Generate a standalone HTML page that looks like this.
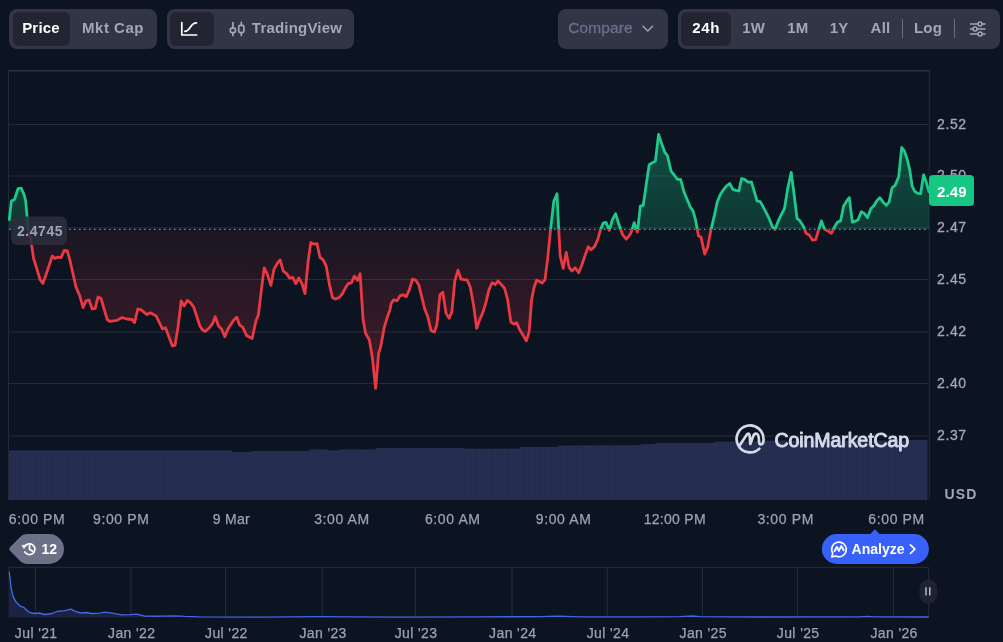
<!DOCTYPE html>
<html><head><meta charset="utf-8"><title>Chart</title>
<style>
*{box-sizing:border-box;margin:0;padding:0}
html,body{width:1003px;height:642px;overflow:hidden;background:#0d1421;font-family:"Liberation Sans",sans-serif;}
body{position:relative;color:#a1a7bb}
.grp{position:absolute;top:9px;height:40px;background:#323546;border-radius:8px}
.pill{position:absolute;top:3px;height:34px;background:#222531;border-radius:6px}
.t{position:absolute;top:-1.5px;height:40px;line-height:40px;font-size:15px;font-weight:bold;color:#a1a7bb;white-space:nowrap;text-align:center;transform:translateX(-50%);letter-spacing:.2px}
.t.w{color:#fff}
.sep{position:absolute;top:10px;width:1px;height:19px;background:#646b80}
svg{position:absolute;left:0;top:0}
.yl{position:absolute;left:937px;width:40px;height:16px;line-height:16px;font-size:14px;color:#a1a7bb;letter-spacing:.6px;-webkit-text-stroke:.3px #a1a7bb}
.xl{position:absolute;top:511px;width:80px;height:16px;line-height:16px;text-align:center;font-size:14px;color:#a1a7bb;white-space:nowrap;letter-spacing:.35px;-webkit-text-stroke:.25px #9ba1b6;color:#9ba1b6}
.nl{position:absolute;top:624.5px;width:80px;height:16px;line-height:16px;text-align:center;font-size:14px;color:#a1a7bb;white-space:nowrap;letter-spacing:.38px;-webkit-text-stroke:.25px #9ba1b6;color:#9ba1b6}
.ly{position:absolute;left:0;top:0;width:1003px;height:642px;will-change:transform;transform:translateZ(0)}
</style></head><body>

<div class="ly"><!-- toolbar -->
<div class="grp" style="left:9px;width:148px">
  <div class="pill" style="left:4px;width:57px"></div>
  <div class="t w" style="left:32px">Price</div>
  <div class="t" style="left:104px;letter-spacing:.5px">Mkt Cap</div>
</div>
<div class="grp" style="left:167px;width:187px">
  <div class="pill" style="left:3px;width:44px"></div>
  <div class="t" style="left:130px">TradingView</div>
</div>
<div class="grp" style="left:558px;width:110px">
  <div class="t" style="left:42.5px;font-weight:normal;color:#68708a;-webkit-text-stroke:.3px #68708a;font-size:15.5px;letter-spacing:.1px">Compare</div>
</div>
<div class="grp" style="left:678px;width:322px">
  <div class="pill" style="left:3px;width:50px"></div>
  <div class="t w" style="left:28.2px;letter-spacing:.7px">24h</div>
  <div class="t" style="left:75.6px">1W</div>
  <div class="t" style="left:119.8px">1M</div>
  <div class="t" style="left:161.2px">1Y</div>
  <div class="t" style="left:202.5px">All</div>
  <div class="sep" style="left:224px"></div>
  <div class="t" style="left:250px">Log</div>
  <div class="sep" style="left:276px"></div>
</div>
</div>

<svg width="1003" height="642" viewBox="0 0 1003 642">
<defs>
<clipPath id="up"><rect x="0" y="0" width="1003" height="229.4"/></clipPath>
<clipPath id="dn"><rect x="0" y="229.4" width="1003" height="300"/></clipPath>
<linearGradient id="gg" x1="0" y1="130" x2="0" y2="229.4" gradientUnits="userSpaceOnUse">
<stop offset="0" stop-color="#16c784" stop-opacity=".34"/><stop offset="1" stop-color="#16c784" stop-opacity=".2"/></linearGradient>
<linearGradient id="rg" x1="0" y1="229.4" x2="0" y2="390" gradientUnits="userSpaceOnUse">
<stop offset="0" stop-color="#ea3943" stop-opacity=".06"/><stop offset="1" stop-color="#ea3943" stop-opacity=".25"/></linearGradient>
<linearGradient id="ng" x1="0" y1="570" x2="0" y2="617" gradientUnits="userSpaceOnUse">
<stop offset="0" stop-color="#3861fb" stop-opacity=".35"/><stop offset="1" stop-color="#3861fb" stop-opacity=".1"/></linearGradient>
</defs>
<!-- toolbar icons -->
<g fill="none" stroke="#fff" stroke-width="1.7" stroke-linecap="round" stroke-linejoin="round">
<path d="M181.8,22.5V35H196.6"/><path d="M184.8,31.4C191,31.2 189.6,23 196.5,22.8"/>
</g>
<g fill="none" stroke="#a1a7bb" stroke-width="1.7" stroke-linecap="round" stroke-linejoin="round">
<rect x="230.3" y="28.1" width="5.2" height="4.5" rx="1.5"/><path d="M232.9,22.5V28.1M232.9,32.6V35.4"/>
<rect x="238.7" y="25.3" width="5.2" height="7.3" rx="1.5"/><path d="M241.3,22.3V25.3M241.3,32.6V35.4"/>
</g>
<path d="M643,26.3L647.8,31L652.6,26.3" fill="none" stroke="#9ea4b8" stroke-width="1.5" stroke-linecap="round" stroke-linejoin="round"/>
<g fill="none" stroke="#a1a7bb" stroke-width="1.5" stroke-linecap="round">
<path d="M970.4,23.9H977.9M982.3,23.9H985M970.4,29H972.8M977.2,29H985M970.4,34H977.9M982.3,34H985"/>
<circle cx="980.1" cy="23.9" r="2"/><circle cx="975" cy="29" r="2"/><circle cx="980.1" cy="34" r="2"/>
</g>

<!-- grid -->
<g stroke="#262b3b" stroke-width="1"><line x1="8.5" x2="929.3" y1="124.5" y2="124.5"/><line x1="8.5" x2="929.3" y1="176.0" y2="176.0"/><line x1="8.5" x2="929.3" y1="227.8" y2="227.8"/><line x1="8.5" x2="929.3" y1="279.5" y2="279.5"/><line x1="8.5" x2="929.3" y1="332.0" y2="332.0"/><line x1="8.5" x2="929.3" y1="383.5" y2="383.5"/><line x1="8.5" x2="929.3" y1="436.0" y2="436.0"/></g>
<g stroke="#242938" stroke-width="1">
<line x1="8.5" x2="8.5" y1="70.5" y2="499.8"/><line x1="929.3" x2="929.3" y1="70.5" y2="499.8"/>
</g>
<line x1="8.0" x2="929.8" y1="70.75" y2="70.75" stroke="#2c3142" stroke-width="1.3"/>
<!-- volume -->
<path d="M9.2,499.8 L9.2,450.5 L12.4,450.5 L15.6,450.5 L18.8,450.5 L22.0,450.5 L25.1,450.5 L28.3,450.5 L31.5,450.5 L34.7,450.5 L37.9,450.5 L41.1,450.5 L44.3,450.5 L47.5,450.5 L50.7,450.5 L53.8,450.5 L57.0,450.5 L60.2,450.5 L63.4,450.5 L66.6,450.5 L69.8,450.5 L73.0,450.5 L76.2,450.5 L79.4,450.5 L82.5,450.5 L85.7,450.5 L88.9,450.5 L92.1,450.5 L95.3,450.5 L98.5,450.5 L101.7,450.5 L104.9,450.5 L108.1,450.5 L111.2,450.5 L114.4,450.5 L117.6,450.5 L120.8,450.6 L124.0,450.6 L127.2,450.6 L130.4,450.6 L133.6,450.6 L136.8,450.6 L139.9,450.6 L143.1,450.6 L146.3,450.6 L149.5,450.6 L152.7,450.6 L155.9,450.6 L159.1,450.6 L162.3,450.6 L165.5,450.6 L168.6,450.6 L171.8,450.6 L175.0,450.6 L178.2,450.6 L181.4,450.6 L184.6,450.6 L187.8,450.6 L191.0,450.6 L194.2,450.6 L197.3,450.6 L200.5,450.6 L203.7,450.6 L206.9,450.6 L210.1,450.6 L213.3,450.6 L216.5,450.6 L219.7,450.6 L222.9,450.6 L226.0,450.6 L229.2,450.6 L232.4,452.0 L235.6,452.0 L238.8,452.0 L242.0,452.0 L245.2,452.0 L248.4,452.0 L251.6,452.0 L254.7,450.9 L257.9,450.9 L261.1,450.9 L264.3,450.9 L267.5,450.9 L270.7,450.9 L273.9,450.9 L277.1,450.9 L280.3,450.9 L283.4,450.9 L286.6,450.9 L289.8,450.9 L293.0,450.9 L296.2,450.9 L299.4,450.9 L302.6,450.9 L305.8,450.9 L309.0,450.9 L312.1,449.5 L315.3,449.5 L318.5,449.5 L321.7,449.5 L324.9,449.5 L328.1,450.6 L331.3,450.6 L334.5,450.6 L337.7,450.6 L340.8,449.5 L344.0,449.5 L347.2,449.5 L350.4,449.5 L353.6,449.5 L356.8,449.5 L360.0,449.5 L363.2,449.5 L366.4,449.5 L369.5,449.5 L372.7,449.5 L375.9,449.5 L379.1,448.1 L382.3,448.1 L385.5,448.1 L388.7,448.1 L391.9,448.1 L395.1,448.1 L398.2,448.1 L401.4,448.1 L404.6,448.1 L407.8,448.1 L411.0,448.1 L414.2,448.1 L417.4,448.1 L420.6,448.1 L423.8,448.1 L426.9,448.1 L430.1,448.1 L433.3,448.1 L436.5,448.1 L439.7,448.1 L442.9,448.1 L446.1,448.1 L449.3,448.1 L452.5,448.1 L455.6,448.1 L458.8,448.1 L462.0,448.1 L465.2,448.8 L468.4,448.8 L471.6,448.8 L474.8,448.8 L478.0,448.8 L481.2,448.8 L484.3,448.8 L487.5,448.8 L490.7,448.8 L493.9,448.7 L497.1,448.7 L500.3,448.7 L503.5,448.7 L506.7,448.7 L509.9,448.7 L513.0,448.7 L516.2,448.7 L519.4,448.7 L522.6,447.0 L525.8,447.0 L529.0,447.0 L532.2,447.0 L535.4,447.0 L538.6,447.0 L541.7,447.0 L544.9,447.0 L548.1,447.0 L551.3,447.0 L554.5,447.0 L557.7,447.0 L560.9,445.7 L564.1,445.7 L567.3,445.7 L570.4,445.6 L573.6,445.6 L576.8,445.6 L580.0,445.6 L583.2,445.6 L586.4,445.6 L589.6,445.5 L592.8,445.5 L596.0,445.5 L599.1,445.5 L602.3,445.5 L605.5,445.5 L608.7,445.5 L611.9,445.4 L615.1,445.4 L618.3,445.4 L621.5,445.4 L624.7,445.4 L627.8,445.3 L631.0,445.3 L634.2,445.3 L637.4,445.2 L640.6,445.2 L643.8,444.3 L647.0,444.3 L650.2,444.3 L653.4,444.3 L656.5,442.9 L659.7,442.9 L662.9,442.9 L666.1,442.9 L669.3,442.9 L672.5,442.9 L675.7,442.9 L678.9,442.9 L682.1,442.9 L685.2,442.9 L688.4,442.9 L691.6,442.9 L694.8,442.9 L698.0,442.9 L701.2,442.9 L704.4,442.9 L707.6,442.9 L710.8,442.9 L713.9,442.9 L717.1,441.8 L720.3,441.8 L723.5,441.8 L726.7,441.7 L729.9,441.7 L733.1,441.7 L736.3,441.7 L739.5,441.7 L742.6,441.7 L745.8,441.7 L749.0,441.6 L752.2,441.6 L755.4,441.6 L758.6,441.6 L761.8,440.8 L765.0,440.8 L768.2,440.8 L771.3,440.8 L774.5,440.8 L777.7,440.8 L780.9,440.8 L784.1,440.8 L787.3,440.8 L790.5,440.8 L793.7,440.8 L796.9,440.8 L800.0,440.8 L803.2,440.8 L806.4,440.8 L809.6,440.8 L812.8,440.8 L816.0,440.8 L819.2,440.8 L822.4,440.8 L825.6,440.8 L828.7,440.8 L831.9,440.8 L835.1,440.8 L838.3,440.8 L841.5,440.8 L844.7,440.8 L847.9,440.8 L851.1,440.8 L854.3,440.8 L857.4,440.8 L860.6,440.8 L863.8,440.8 L867.0,440.8 L870.2,440.8 L873.4,440.8 L876.6,440.8 L879.8,440.8 L883.0,440.8 L886.1,440.8 L889.3,440.8 L892.5,440.8 L895.7,440.8 L898.9,440.8 L902.1,440.8 L905.3,440.6 L908.5,439.9 L911.7,439.9 L914.8,439.9 L918.0,439.9 L921.2,439.9 L924.4,439.9 L927.6,439.9 L927.6,499.8 Z" fill="#212a4c"/>
<g fill="#262f52"><rect x="9.20" y="450.5" width="2.64" height="49.3"/><rect x="12.39" y="450.5" width="2.64" height="49.3"/><rect x="15.58" y="450.5" width="2.64" height="49.3"/><rect x="18.77" y="450.5" width="2.64" height="49.3"/><rect x="21.96" y="450.5" width="2.64" height="49.3"/><rect x="25.14" y="450.5" width="2.64" height="49.3"/><rect x="28.33" y="450.5" width="2.64" height="49.3"/><rect x="31.52" y="450.5" width="2.64" height="49.3"/><rect x="34.71" y="450.5" width="2.64" height="49.3"/><rect x="37.90" y="450.5" width="2.64" height="49.3"/><rect x="41.09" y="450.5" width="2.64" height="49.3"/><rect x="44.28" y="450.5" width="2.64" height="49.3"/><rect x="47.47" y="450.5" width="2.64" height="49.3"/><rect x="50.66" y="450.5" width="2.64" height="49.3"/><rect x="53.84" y="450.5" width="2.64" height="49.3"/><rect x="57.03" y="450.5" width="2.64" height="49.3"/><rect x="60.22" y="450.5" width="2.64" height="49.3"/><rect x="63.41" y="450.5" width="2.64" height="49.3"/><rect x="66.60" y="450.5" width="2.64" height="49.3"/><rect x="69.79" y="450.5" width="2.64" height="49.3"/><rect x="72.98" y="450.5" width="2.64" height="49.3"/><rect x="76.17" y="450.5" width="2.64" height="49.3"/><rect x="79.36" y="450.5" width="2.64" height="49.3"/><rect x="82.54" y="450.5" width="2.64" height="49.3"/><rect x="85.73" y="450.5" width="2.64" height="49.3"/><rect x="88.92" y="450.5" width="2.64" height="49.3"/><rect x="92.11" y="450.5" width="2.64" height="49.3"/><rect x="95.30" y="450.5" width="2.64" height="49.3"/><rect x="98.49" y="450.5" width="2.64" height="49.3"/><rect x="101.68" y="450.5" width="2.64" height="49.3"/><rect x="104.87" y="450.5" width="2.64" height="49.3"/><rect x="108.06" y="450.5" width="2.64" height="49.3"/><rect x="111.24" y="450.5" width="2.64" height="49.3"/><rect x="114.43" y="450.5" width="2.64" height="49.3"/><rect x="117.62" y="450.5" width="2.64" height="49.3"/><rect x="120.81" y="450.6" width="2.64" height="49.2"/><rect x="124.00" y="450.6" width="2.64" height="49.2"/><rect x="127.19" y="450.6" width="2.64" height="49.2"/><rect x="130.38" y="450.6" width="2.64" height="49.2"/><rect x="133.57" y="450.6" width="2.64" height="49.2"/><rect x="136.76" y="450.6" width="2.64" height="49.2"/><rect x="139.94" y="450.6" width="2.64" height="49.2"/><rect x="143.13" y="450.6" width="2.64" height="49.2"/><rect x="146.32" y="450.6" width="2.64" height="49.2"/><rect x="149.51" y="450.6" width="2.64" height="49.2"/><rect x="152.70" y="450.6" width="2.64" height="49.2"/><rect x="155.89" y="450.6" width="2.64" height="49.2"/><rect x="159.08" y="450.6" width="2.64" height="49.2"/><rect x="162.27" y="450.6" width="2.64" height="49.2"/><rect x="165.46" y="450.6" width="2.64" height="49.2"/><rect x="168.64" y="450.6" width="2.64" height="49.2"/><rect x="171.83" y="450.6" width="2.64" height="49.2"/><rect x="175.02" y="450.6" width="2.64" height="49.2"/><rect x="178.21" y="450.6" width="2.64" height="49.2"/><rect x="181.40" y="450.6" width="2.64" height="49.2"/><rect x="184.59" y="450.6" width="2.64" height="49.2"/><rect x="187.78" y="450.6" width="2.64" height="49.2"/><rect x="190.97" y="450.6" width="2.64" height="49.2"/><rect x="194.16" y="450.6" width="2.64" height="49.2"/><rect x="197.34" y="450.6" width="2.64" height="49.2"/><rect x="200.53" y="450.6" width="2.64" height="49.2"/><rect x="203.72" y="450.6" width="2.64" height="49.2"/><rect x="206.91" y="450.6" width="2.64" height="49.2"/><rect x="210.10" y="450.6" width="2.64" height="49.2"/><rect x="213.29" y="450.6" width="2.64" height="49.2"/><rect x="216.48" y="450.6" width="2.64" height="49.2"/><rect x="219.67" y="450.6" width="2.64" height="49.2"/><rect x="222.86" y="450.6" width="2.64" height="49.2"/><rect x="226.04" y="450.6" width="2.64" height="49.2"/><rect x="229.23" y="450.6" width="2.64" height="49.2"/><rect x="232.42" y="452.0" width="2.64" height="47.8"/><rect x="235.61" y="452.0" width="2.64" height="47.8"/><rect x="238.80" y="452.0" width="2.64" height="47.8"/><rect x="241.99" y="452.0" width="2.64" height="47.8"/><rect x="245.18" y="452.0" width="2.64" height="47.8"/><rect x="248.37" y="452.0" width="2.64" height="47.8"/><rect x="251.56" y="450.9" width="2.64" height="48.9"/><rect x="254.74" y="450.9" width="2.64" height="48.9"/><rect x="257.93" y="450.9" width="2.64" height="48.9"/><rect x="261.12" y="450.9" width="2.64" height="48.9"/><rect x="264.31" y="450.9" width="2.64" height="48.9"/><rect x="267.50" y="450.9" width="2.64" height="48.9"/><rect x="270.69" y="450.9" width="2.64" height="48.9"/><rect x="273.88" y="450.9" width="2.64" height="48.9"/><rect x="277.07" y="450.9" width="2.64" height="48.9"/><rect x="280.26" y="450.9" width="2.64" height="48.9"/><rect x="283.44" y="450.9" width="2.64" height="48.9"/><rect x="286.63" y="450.9" width="2.64" height="48.9"/><rect x="289.82" y="450.9" width="2.64" height="48.9"/><rect x="293.01" y="450.9" width="2.64" height="48.9"/><rect x="296.20" y="450.9" width="2.64" height="48.9"/><rect x="299.39" y="450.9" width="2.64" height="48.9"/><rect x="302.58" y="450.9" width="2.64" height="48.9"/><rect x="305.77" y="450.9" width="2.64" height="48.9"/><rect x="308.96" y="449.5" width="2.64" height="50.3"/><rect x="312.14" y="449.5" width="2.64" height="50.3"/><rect x="315.33" y="449.5" width="2.64" height="50.3"/><rect x="318.52" y="449.5" width="2.64" height="50.3"/><rect x="321.71" y="449.5" width="2.64" height="50.3"/><rect x="324.90" y="449.5" width="2.64" height="50.3"/><rect x="328.09" y="450.6" width="2.64" height="49.2"/><rect x="331.28" y="450.6" width="2.64" height="49.2"/><rect x="334.47" y="450.6" width="2.64" height="49.2"/><rect x="337.66" y="450.6" width="2.64" height="49.2"/><rect x="340.84" y="449.5" width="2.64" height="50.3"/><rect x="344.03" y="449.5" width="2.64" height="50.3"/><rect x="347.22" y="449.5" width="2.64" height="50.3"/><rect x="350.41" y="449.5" width="2.64" height="50.3"/><rect x="353.60" y="449.5" width="2.64" height="50.3"/><rect x="356.79" y="449.5" width="2.64" height="50.3"/><rect x="359.98" y="449.5" width="2.64" height="50.3"/><rect x="363.17" y="449.5" width="2.64" height="50.3"/><rect x="366.36" y="449.5" width="2.64" height="50.3"/><rect x="369.54" y="449.5" width="2.64" height="50.3"/><rect x="372.73" y="449.5" width="2.64" height="50.3"/><rect x="375.92" y="448.1" width="2.64" height="51.7"/><rect x="379.11" y="448.1" width="2.64" height="51.7"/><rect x="382.30" y="448.1" width="2.64" height="51.7"/><rect x="385.49" y="448.1" width="2.64" height="51.7"/><rect x="388.68" y="448.1" width="2.64" height="51.7"/><rect x="391.87" y="448.1" width="2.64" height="51.7"/><rect x="395.06" y="448.1" width="2.64" height="51.7"/><rect x="398.24" y="448.1" width="2.64" height="51.7"/><rect x="401.43" y="448.1" width="2.64" height="51.7"/><rect x="404.62" y="448.1" width="2.64" height="51.7"/><rect x="407.81" y="448.1" width="2.64" height="51.7"/><rect x="411.00" y="448.1" width="2.64" height="51.7"/><rect x="414.19" y="448.1" width="2.64" height="51.7"/><rect x="417.38" y="448.1" width="2.64" height="51.7"/><rect x="420.57" y="448.1" width="2.64" height="51.7"/><rect x="423.76" y="448.1" width="2.64" height="51.7"/><rect x="426.94" y="448.1" width="2.64" height="51.7"/><rect x="430.13" y="448.1" width="2.64" height="51.7"/><rect x="433.32" y="448.1" width="2.64" height="51.7"/><rect x="436.51" y="448.1" width="2.64" height="51.7"/><rect x="439.70" y="448.1" width="2.64" height="51.7"/><rect x="442.89" y="448.1" width="2.64" height="51.7"/><rect x="446.08" y="448.1" width="2.64" height="51.7"/><rect x="449.27" y="448.1" width="2.64" height="51.7"/><rect x="452.46" y="448.1" width="2.64" height="51.7"/><rect x="455.64" y="448.1" width="2.64" height="51.7"/><rect x="458.83" y="448.1" width="2.64" height="51.7"/><rect x="462.02" y="448.1" width="2.64" height="51.7"/><rect x="465.21" y="448.8" width="2.64" height="51.0"/><rect x="468.40" y="448.8" width="2.64" height="51.0"/><rect x="471.59" y="448.8" width="2.64" height="51.0"/><rect x="474.78" y="448.8" width="2.64" height="51.0"/><rect x="477.97" y="448.8" width="2.64" height="51.0"/><rect x="481.16" y="448.8" width="2.64" height="51.0"/><rect x="484.34" y="448.8" width="2.64" height="51.0"/><rect x="487.53" y="448.8" width="2.64" height="51.0"/><rect x="490.72" y="448.8" width="2.64" height="51.0"/><rect x="493.91" y="448.7" width="2.64" height="51.1"/><rect x="497.10" y="448.7" width="2.64" height="51.1"/><rect x="500.29" y="448.7" width="2.64" height="51.1"/><rect x="503.48" y="448.7" width="2.64" height="51.1"/><rect x="506.67" y="448.7" width="2.64" height="51.1"/><rect x="509.86" y="448.7" width="2.64" height="51.1"/><rect x="513.04" y="448.7" width="2.64" height="51.1"/><rect x="516.23" y="448.7" width="2.64" height="51.1"/><rect x="519.42" y="447.0" width="2.64" height="52.8"/><rect x="522.61" y="447.0" width="2.64" height="52.8"/><rect x="525.80" y="447.0" width="2.64" height="52.8"/><rect x="528.99" y="447.0" width="2.64" height="52.8"/><rect x="532.18" y="447.0" width="2.64" height="52.8"/><rect x="535.37" y="447.0" width="2.64" height="52.8"/><rect x="538.56" y="447.0" width="2.64" height="52.8"/><rect x="541.74" y="447.0" width="2.64" height="52.8"/><rect x="544.93" y="447.0" width="2.64" height="52.8"/><rect x="548.12" y="447.0" width="2.64" height="52.8"/><rect x="551.31" y="447.0" width="2.64" height="52.8"/><rect x="554.50" y="447.0" width="2.64" height="52.8"/><rect x="557.69" y="445.7" width="2.64" height="54.1"/><rect x="560.88" y="445.7" width="2.64" height="54.1"/><rect x="564.07" y="445.7" width="2.64" height="54.1"/><rect x="567.26" y="445.7" width="2.64" height="54.1"/><rect x="570.44" y="445.6" width="2.64" height="54.2"/><rect x="573.63" y="445.6" width="2.64" height="54.2"/><rect x="576.82" y="445.6" width="2.64" height="54.2"/><rect x="580.01" y="445.6" width="2.64" height="54.2"/><rect x="583.20" y="445.6" width="2.64" height="54.2"/><rect x="586.39" y="445.6" width="2.64" height="54.2"/><rect x="589.58" y="445.5" width="2.64" height="54.3"/><rect x="592.77" y="445.5" width="2.64" height="54.3"/><rect x="595.96" y="445.5" width="2.64" height="54.3"/><rect x="599.14" y="445.5" width="2.64" height="54.3"/><rect x="602.33" y="445.5" width="2.64" height="54.3"/><rect x="605.52" y="445.5" width="2.64" height="54.3"/><rect x="608.71" y="445.4" width="2.64" height="54.4"/><rect x="611.90" y="445.4" width="2.64" height="54.4"/><rect x="615.09" y="445.4" width="2.64" height="54.4"/><rect x="618.28" y="445.4" width="2.64" height="54.4"/><rect x="621.47" y="445.4" width="2.64" height="54.4"/><rect x="624.66" y="445.3" width="2.64" height="54.5"/><rect x="627.84" y="445.3" width="2.64" height="54.5"/><rect x="631.03" y="445.3" width="2.64" height="54.5"/><rect x="634.22" y="445.3" width="2.64" height="54.5"/><rect x="637.41" y="445.2" width="2.64" height="54.6"/><rect x="640.60" y="444.3" width="2.64" height="55.5"/><rect x="643.79" y="444.3" width="2.64" height="55.5"/><rect x="646.98" y="444.3" width="2.64" height="55.5"/><rect x="650.17" y="444.3" width="2.64" height="55.5"/><rect x="653.36" y="444.3" width="2.64" height="55.5"/><rect x="656.54" y="442.9" width="2.64" height="56.9"/><rect x="659.73" y="442.9" width="2.64" height="56.9"/><rect x="662.92" y="442.9" width="2.64" height="56.9"/><rect x="666.11" y="442.9" width="2.64" height="56.9"/><rect x="669.30" y="442.9" width="2.64" height="56.9"/><rect x="672.49" y="442.9" width="2.64" height="56.9"/><rect x="675.68" y="442.9" width="2.64" height="56.9"/><rect x="678.87" y="442.9" width="2.64" height="56.9"/><rect x="682.06" y="442.9" width="2.64" height="56.9"/><rect x="685.24" y="442.9" width="2.64" height="56.9"/><rect x="688.43" y="442.9" width="2.64" height="56.9"/><rect x="691.62" y="442.9" width="2.64" height="56.9"/><rect x="694.81" y="442.9" width="2.64" height="56.9"/><rect x="698.00" y="442.9" width="2.64" height="56.9"/><rect x="701.19" y="442.9" width="2.64" height="56.9"/><rect x="704.38" y="442.9" width="2.64" height="56.9"/><rect x="707.57" y="442.9" width="2.64" height="56.9"/><rect x="710.76" y="442.9" width="2.64" height="56.9"/><rect x="713.94" y="441.8" width="2.64" height="58.0"/><rect x="717.13" y="441.8" width="2.64" height="58.0"/><rect x="720.32" y="441.8" width="2.64" height="58.0"/><rect x="723.51" y="441.8" width="2.64" height="58.0"/><rect x="726.70" y="441.7" width="2.64" height="58.1"/><rect x="729.89" y="441.7" width="2.64" height="58.1"/><rect x="733.08" y="441.7" width="2.64" height="58.1"/><rect x="736.27" y="441.7" width="2.64" height="58.1"/><rect x="739.46" y="441.7" width="2.64" height="58.1"/><rect x="742.64" y="441.7" width="2.64" height="58.1"/><rect x="745.83" y="441.7" width="2.64" height="58.1"/><rect x="749.02" y="441.6" width="2.64" height="58.2"/><rect x="752.21" y="441.6" width="2.64" height="58.2"/><rect x="755.40" y="441.6" width="2.64" height="58.2"/><rect x="758.59" y="441.5" width="2.64" height="58.3"/><rect x="761.78" y="440.8" width="2.64" height="59.0"/><rect x="764.97" y="440.8" width="2.64" height="59.0"/><rect x="768.16" y="440.8" width="2.64" height="59.0"/><rect x="771.34" y="440.8" width="2.64" height="59.0"/><rect x="774.53" y="440.8" width="2.64" height="59.0"/><rect x="777.72" y="440.8" width="2.64" height="59.0"/><rect x="780.91" y="440.8" width="2.64" height="59.0"/><rect x="784.10" y="440.8" width="2.64" height="59.0"/><rect x="787.29" y="440.8" width="2.64" height="59.0"/><rect x="790.48" y="440.8" width="2.64" height="59.0"/><rect x="793.67" y="440.8" width="2.64" height="59.0"/><rect x="796.86" y="440.8" width="2.64" height="59.0"/><rect x="800.04" y="440.8" width="2.64" height="59.0"/><rect x="803.23" y="440.8" width="2.64" height="59.0"/><rect x="806.42" y="440.8" width="2.64" height="59.0"/><rect x="809.61" y="440.8" width="2.64" height="59.0"/><rect x="812.80" y="440.8" width="2.64" height="59.0"/><rect x="815.99" y="440.8" width="2.64" height="59.0"/><rect x="819.18" y="440.8" width="2.64" height="59.0"/><rect x="822.37" y="440.8" width="2.64" height="59.0"/><rect x="825.56" y="440.8" width="2.64" height="59.0"/><rect x="828.74" y="440.8" width="2.64" height="59.0"/><rect x="831.93" y="440.8" width="2.64" height="59.0"/><rect x="835.12" y="440.8" width="2.64" height="59.0"/><rect x="838.31" y="440.8" width="2.64" height="59.0"/><rect x="841.50" y="440.8" width="2.64" height="59.0"/><rect x="844.69" y="440.8" width="2.64" height="59.0"/><rect x="847.88" y="440.8" width="2.64" height="59.0"/><rect x="851.07" y="440.8" width="2.64" height="59.0"/><rect x="854.26" y="440.8" width="2.64" height="59.0"/><rect x="857.44" y="440.8" width="2.64" height="59.0"/><rect x="860.63" y="440.8" width="2.64" height="59.0"/><rect x="863.82" y="440.8" width="2.64" height="59.0"/><rect x="867.01" y="440.8" width="2.64" height="59.0"/><rect x="870.20" y="440.8" width="2.64" height="59.0"/><rect x="873.39" y="440.8" width="2.64" height="59.0"/><rect x="876.58" y="440.8" width="2.64" height="59.0"/><rect x="879.77" y="440.8" width="2.64" height="59.0"/><rect x="882.96" y="440.8" width="2.64" height="59.0"/><rect x="886.14" y="440.8" width="2.64" height="59.0"/><rect x="889.33" y="440.8" width="2.64" height="59.0"/><rect x="892.52" y="440.8" width="2.64" height="59.0"/><rect x="895.71" y="440.8" width="2.64" height="59.0"/><rect x="898.90" y="440.8" width="2.64" height="59.0"/><rect x="902.09" y="440.8" width="2.64" height="59.0"/><rect x="905.28" y="439.9" width="2.64" height="59.9"/><rect x="908.47" y="439.9" width="2.64" height="59.9"/><rect x="911.66" y="439.9" width="2.64" height="59.9"/><rect x="914.84" y="439.9" width="2.64" height="59.9"/><rect x="918.03" y="439.9" width="2.64" height="59.9"/><rect x="921.22" y="439.9" width="2.64" height="59.9"/><rect x="924.41" y="439.9" width="2.64" height="59.9"/></g>
<!-- fills -->
<path d="M9.3,219.5 L11.4,201.0 L14.5,199.4 L18.0,188.7 L21.2,188.2 L24.2,195.0 L25.7,201.0 L27.0,216.0 L28.3,229.0 L31.2,242.3 L33.6,258.5 L36.0,266.0 L40.0,279.7 L42.9,283.4 L46.0,274.7 L52.3,256.0 L54.8,258.5 L57.3,257.2 L61.0,257.7 L64.3,250.5 L67.3,251.0 L69.8,259.7 L76.0,287.1 L79.8,295.9 L83.0,307.6 L86.0,300.9 L89.0,300.0 L92.2,309.0 L95.2,308.3 L98.0,297.0 L101.0,298.4 L107.2,319.5 L109.7,321.3 L117.0,320.3 L122.0,317.6 L127.0,319.0 L132.0,319.5 L134.6,322.5 L137.8,309.0 L140.8,309.6 L147.0,314.6 L150.3,312.8 L156.2,316.0 L162.5,329.0 L165.5,327.7 L172.4,345.9 L175.0,345.2 L178.0,327.2 L181.2,301.0 L184.1,306.0 L187.4,300.3 L190.6,302.8 L193.6,306.8 L199.9,326.0 L202.3,329.7 L205.3,331.5 L208.6,328.5 L212.3,324.2 L215.3,316.8 L218.5,326.0 L221.5,329.0 L224.8,336.7 L227.8,329.2 L233.5,320.3 L236.7,317.3 L239.7,325.2 L242.7,327.2 L246.5,335.5 L252.2,338.5 L255.9,321.0 L258.4,314.8 L261.4,289.9 L264.2,267.9 L267.1,273.6 L270.9,285.4 L273.9,269.4 L277.1,263.7 L280.1,259.9 L283.3,271.2 L286.6,273.6 L289.6,278.1 L292.8,277.4 L295.8,283.6 L298.8,277.9 L302.0,283.6 L305.0,293.6 L308.3,259.9 L310.8,242.5 L314.0,244.2 L317.0,243.7 L320.0,257.4 L323.2,259.9 L326.2,266.2 L329.5,284.9 L332.5,297.8 L335.7,299.1 L339.4,297.3 L342.4,293.6 L345.7,287.4 L348.2,283.6 L351.4,282.9 L354.4,276.1 L357.4,280.4 L360.1,273.6 L363.1,319.8 L365.6,333.5 L369.3,339.7 L372.3,357.1 L375.6,388.3 L378.6,353.4 L380.6,347.2 L384.3,327.2 L387.3,317.3 L390.0,309.6 L391.2,303.4 L393.7,299.7 L397.0,300.9 L400.0,295.9 L403.0,294.7 L406.2,296.7 L409.4,289.7 L412.4,279.2 L415.7,280.2 L418.7,284.7 L421.2,294.7 L424.9,309.6 L427.9,317.1 L431.1,330.8 L434.4,332.1 L436.9,324.6 L439.9,294.7 L442.8,292.2 L446.1,313.4 L449.1,318.4 L451.8,312.1 L454.8,281.0 L458.0,270.3 L461.0,279.2 L464.3,279.7 L467.3,280.2 L470.3,287.2 L473.5,304.7 L476.7,328.3 L479.7,319.6 L483.0,312.1 L486.0,302.2 L489.0,289.7 L492.2,282.7 L495.2,284.7 L497.9,281.0 L501.4,284.7 L504.7,288.5 L507.6,299.7 L510.9,322.1 L513.9,324.1 L516.6,322.6 L519.6,329.6 L523.4,335.8 L526.3,340.8 L529.1,332.1 L531.6,299.7 L534.1,287.2 L536.6,280.2 L539.6,281.5 L542.0,283.0 L545.0,279.7 L547.8,257.3 L550.8,227.4 L553.8,201.2 L557.0,193.7 L558.6,227.4 L560.2,256.0 L563.2,268.5 L566.2,252.3 L569.0,267.3 L572.0,271.0 L575.2,267.8 L578.7,272.8 L581.9,264.8 L584.9,256.0 L588.2,246.8 L591.1,249.8 L594.4,246.8 L597.6,239.9 L600.6,229.4 L603.1,223.2 L606.1,222.4 L609.3,230.4 L612.3,219.9 L615.6,213.7 L618.6,223.6 L621.3,231.0 L622.5,234.6 L626.2,239.1 L630.0,234.6 L631.7,230.9 L634.2,222.7 L637.4,232.1 L640.4,206.0 L643.2,205.5 L646.2,184.8 L649.2,164.8 L652.4,162.8 L655.4,161.1 L658.6,134.4 L661.6,143.6 L664.9,152.4 L667.4,155.6 L671.1,171.1 L674.1,174.8 L677.3,179.3 L680.6,179.3 L684.1,192.3 L687.3,199.7 L690.3,207.2 L693.0,210.9 L695.5,219.7 L698.5,235.9 L701.0,237.1 L704.7,254.1 L707.7,247.1 L711.0,229.6 L714.0,217.2 L717.2,202.2 L720.2,194.7 L723.4,189.8 L726.4,186.0 L729.7,183.5 L732.9,189.3 L735.9,190.3 L738.9,191.0 L741.6,178.5 L744.6,179.3 L748.4,182.3 L751.4,181.8 L753.8,189.8 L757.1,201.0 L760.3,201.7 L763.3,207.2 L766.6,213.4 L769.6,219.7 L772.5,227.1 L775.0,229.6 L778.3,220.9 L781.3,214.7 L784.5,208.5 L787.7,188.5 L791.2,172.3 L794.0,193.5 L797.0,218.4 L800.0,220.9 L803.2,225.9 L806.2,233.4 L809.4,235.1 L812.4,240.1 L815.7,239.6 L818.7,229.6 L821.4,220.9 L824.4,229.1 L827.6,230.9 L831.4,233.4 L834.4,227.1 L837.3,222.2 L840.6,220.9 L843.6,206.0 L846.3,201.7 L849.3,197.7 L852.3,222.2 L855.0,221.4 L858.0,219.7 L861.3,211.7 L864.3,213.4 L867.5,217.7 L870.8,208.7 L873.8,205.7 L876.8,200.7 L879.8,197.7 L883.2,202.1 L886.3,205.3 L889.1,202.1 L892.1,187.8 L895.1,185.4 L898.7,176.8 L901.7,147.5 L904.3,150.9 L907.1,158.9 L909.7,169.8 L912.1,185.8 L914.7,191.4 L917.7,193.4 L920.6,193.7 L923.6,174.8 L926.2,181.8 L929.0,191.8 L929.0,229.4 L9.3,229.4 Z" fill="url(#gg)" clip-path="url(#up)"/>
<path d="M9.3,219.5 L11.4,201.0 L14.5,199.4 L18.0,188.7 L21.2,188.2 L24.2,195.0 L25.7,201.0 L27.0,216.0 L28.3,229.0 L31.2,242.3 L33.6,258.5 L36.0,266.0 L40.0,279.7 L42.9,283.4 L46.0,274.7 L52.3,256.0 L54.8,258.5 L57.3,257.2 L61.0,257.7 L64.3,250.5 L67.3,251.0 L69.8,259.7 L76.0,287.1 L79.8,295.9 L83.0,307.6 L86.0,300.9 L89.0,300.0 L92.2,309.0 L95.2,308.3 L98.0,297.0 L101.0,298.4 L107.2,319.5 L109.7,321.3 L117.0,320.3 L122.0,317.6 L127.0,319.0 L132.0,319.5 L134.6,322.5 L137.8,309.0 L140.8,309.6 L147.0,314.6 L150.3,312.8 L156.2,316.0 L162.5,329.0 L165.5,327.7 L172.4,345.9 L175.0,345.2 L178.0,327.2 L181.2,301.0 L184.1,306.0 L187.4,300.3 L190.6,302.8 L193.6,306.8 L199.9,326.0 L202.3,329.7 L205.3,331.5 L208.6,328.5 L212.3,324.2 L215.3,316.8 L218.5,326.0 L221.5,329.0 L224.8,336.7 L227.8,329.2 L233.5,320.3 L236.7,317.3 L239.7,325.2 L242.7,327.2 L246.5,335.5 L252.2,338.5 L255.9,321.0 L258.4,314.8 L261.4,289.9 L264.2,267.9 L267.1,273.6 L270.9,285.4 L273.9,269.4 L277.1,263.7 L280.1,259.9 L283.3,271.2 L286.6,273.6 L289.6,278.1 L292.8,277.4 L295.8,283.6 L298.8,277.9 L302.0,283.6 L305.0,293.6 L308.3,259.9 L310.8,242.5 L314.0,244.2 L317.0,243.7 L320.0,257.4 L323.2,259.9 L326.2,266.2 L329.5,284.9 L332.5,297.8 L335.7,299.1 L339.4,297.3 L342.4,293.6 L345.7,287.4 L348.2,283.6 L351.4,282.9 L354.4,276.1 L357.4,280.4 L360.1,273.6 L363.1,319.8 L365.6,333.5 L369.3,339.7 L372.3,357.1 L375.6,388.3 L378.6,353.4 L380.6,347.2 L384.3,327.2 L387.3,317.3 L390.0,309.6 L391.2,303.4 L393.7,299.7 L397.0,300.9 L400.0,295.9 L403.0,294.7 L406.2,296.7 L409.4,289.7 L412.4,279.2 L415.7,280.2 L418.7,284.7 L421.2,294.7 L424.9,309.6 L427.9,317.1 L431.1,330.8 L434.4,332.1 L436.9,324.6 L439.9,294.7 L442.8,292.2 L446.1,313.4 L449.1,318.4 L451.8,312.1 L454.8,281.0 L458.0,270.3 L461.0,279.2 L464.3,279.7 L467.3,280.2 L470.3,287.2 L473.5,304.7 L476.7,328.3 L479.7,319.6 L483.0,312.1 L486.0,302.2 L489.0,289.7 L492.2,282.7 L495.2,284.7 L497.9,281.0 L501.4,284.7 L504.7,288.5 L507.6,299.7 L510.9,322.1 L513.9,324.1 L516.6,322.6 L519.6,329.6 L523.4,335.8 L526.3,340.8 L529.1,332.1 L531.6,299.7 L534.1,287.2 L536.6,280.2 L539.6,281.5 L542.0,283.0 L545.0,279.7 L547.8,257.3 L550.8,227.4 L553.8,201.2 L557.0,193.7 L558.6,227.4 L560.2,256.0 L563.2,268.5 L566.2,252.3 L569.0,267.3 L572.0,271.0 L575.2,267.8 L578.7,272.8 L581.9,264.8 L584.9,256.0 L588.2,246.8 L591.1,249.8 L594.4,246.8 L597.6,239.9 L600.6,229.4 L603.1,223.2 L606.1,222.4 L609.3,230.4 L612.3,219.9 L615.6,213.7 L618.6,223.6 L621.3,231.0 L622.5,234.6 L626.2,239.1 L630.0,234.6 L631.7,230.9 L634.2,222.7 L637.4,232.1 L640.4,206.0 L643.2,205.5 L646.2,184.8 L649.2,164.8 L652.4,162.8 L655.4,161.1 L658.6,134.4 L661.6,143.6 L664.9,152.4 L667.4,155.6 L671.1,171.1 L674.1,174.8 L677.3,179.3 L680.6,179.3 L684.1,192.3 L687.3,199.7 L690.3,207.2 L693.0,210.9 L695.5,219.7 L698.5,235.9 L701.0,237.1 L704.7,254.1 L707.7,247.1 L711.0,229.6 L714.0,217.2 L717.2,202.2 L720.2,194.7 L723.4,189.8 L726.4,186.0 L729.7,183.5 L732.9,189.3 L735.9,190.3 L738.9,191.0 L741.6,178.5 L744.6,179.3 L748.4,182.3 L751.4,181.8 L753.8,189.8 L757.1,201.0 L760.3,201.7 L763.3,207.2 L766.6,213.4 L769.6,219.7 L772.5,227.1 L775.0,229.6 L778.3,220.9 L781.3,214.7 L784.5,208.5 L787.7,188.5 L791.2,172.3 L794.0,193.5 L797.0,218.4 L800.0,220.9 L803.2,225.9 L806.2,233.4 L809.4,235.1 L812.4,240.1 L815.7,239.6 L818.7,229.6 L821.4,220.9 L824.4,229.1 L827.6,230.9 L831.4,233.4 L834.4,227.1 L837.3,222.2 L840.6,220.9 L843.6,206.0 L846.3,201.7 L849.3,197.7 L852.3,222.2 L855.0,221.4 L858.0,219.7 L861.3,211.7 L864.3,213.4 L867.5,217.7 L870.8,208.7 L873.8,205.7 L876.8,200.7 L879.8,197.7 L883.2,202.1 L886.3,205.3 L889.1,202.1 L892.1,187.8 L895.1,185.4 L898.7,176.8 L901.7,147.5 L904.3,150.9 L907.1,158.9 L909.7,169.8 L912.1,185.8 L914.7,191.4 L917.7,193.4 L920.6,193.7 L923.6,174.8 L926.2,181.8 L929.0,191.8 L929.0,229.4 L9.3,229.4 Z" fill="url(#rg)" clip-path="url(#dn)"/>
<!-- baseline -->
<line x1="9.3" x2="929.3" y1="229.4" y2="229.4" stroke="#aeb3c4" stroke-width="1.1" stroke-dasharray="1.1 3.9"/>
<!-- line -->
<path d="M9.3,219.5 L11.4,201.0 L14.5,199.4 L18.0,188.7 L21.2,188.2 L24.2,195.0 L25.7,201.0 L27.0,216.0 L28.3,229.0 L31.2,242.3 L33.6,258.5 L36.0,266.0 L40.0,279.7 L42.9,283.4 L46.0,274.7 L52.3,256.0 L54.8,258.5 L57.3,257.2 L61.0,257.7 L64.3,250.5 L67.3,251.0 L69.8,259.7 L76.0,287.1 L79.8,295.9 L83.0,307.6 L86.0,300.9 L89.0,300.0 L92.2,309.0 L95.2,308.3 L98.0,297.0 L101.0,298.4 L107.2,319.5 L109.7,321.3 L117.0,320.3 L122.0,317.6 L127.0,319.0 L132.0,319.5 L134.6,322.5 L137.8,309.0 L140.8,309.6 L147.0,314.6 L150.3,312.8 L156.2,316.0 L162.5,329.0 L165.5,327.7 L172.4,345.9 L175.0,345.2 L178.0,327.2 L181.2,301.0 L184.1,306.0 L187.4,300.3 L190.6,302.8 L193.6,306.8 L199.9,326.0 L202.3,329.7 L205.3,331.5 L208.6,328.5 L212.3,324.2 L215.3,316.8 L218.5,326.0 L221.5,329.0 L224.8,336.7 L227.8,329.2 L233.5,320.3 L236.7,317.3 L239.7,325.2 L242.7,327.2 L246.5,335.5 L252.2,338.5 L255.9,321.0 L258.4,314.8 L261.4,289.9 L264.2,267.9 L267.1,273.6 L270.9,285.4 L273.9,269.4 L277.1,263.7 L280.1,259.9 L283.3,271.2 L286.6,273.6 L289.6,278.1 L292.8,277.4 L295.8,283.6 L298.8,277.9 L302.0,283.6 L305.0,293.6 L308.3,259.9 L310.8,242.5 L314.0,244.2 L317.0,243.7 L320.0,257.4 L323.2,259.9 L326.2,266.2 L329.5,284.9 L332.5,297.8 L335.7,299.1 L339.4,297.3 L342.4,293.6 L345.7,287.4 L348.2,283.6 L351.4,282.9 L354.4,276.1 L357.4,280.4 L360.1,273.6 L363.1,319.8 L365.6,333.5 L369.3,339.7 L372.3,357.1 L375.6,388.3 L378.6,353.4 L380.6,347.2 L384.3,327.2 L387.3,317.3 L390.0,309.6 L391.2,303.4 L393.7,299.7 L397.0,300.9 L400.0,295.9 L403.0,294.7 L406.2,296.7 L409.4,289.7 L412.4,279.2 L415.7,280.2 L418.7,284.7 L421.2,294.7 L424.9,309.6 L427.9,317.1 L431.1,330.8 L434.4,332.1 L436.9,324.6 L439.9,294.7 L442.8,292.2 L446.1,313.4 L449.1,318.4 L451.8,312.1 L454.8,281.0 L458.0,270.3 L461.0,279.2 L464.3,279.7 L467.3,280.2 L470.3,287.2 L473.5,304.7 L476.7,328.3 L479.7,319.6 L483.0,312.1 L486.0,302.2 L489.0,289.7 L492.2,282.7 L495.2,284.7 L497.9,281.0 L501.4,284.7 L504.7,288.5 L507.6,299.7 L510.9,322.1 L513.9,324.1 L516.6,322.6 L519.6,329.6 L523.4,335.8 L526.3,340.8 L529.1,332.1 L531.6,299.7 L534.1,287.2 L536.6,280.2 L539.6,281.5 L542.0,283.0 L545.0,279.7 L547.8,257.3 L550.8,227.4 L553.8,201.2 L557.0,193.7 L558.6,227.4 L560.2,256.0 L563.2,268.5 L566.2,252.3 L569.0,267.3 L572.0,271.0 L575.2,267.8 L578.7,272.8 L581.9,264.8 L584.9,256.0 L588.2,246.8 L591.1,249.8 L594.4,246.8 L597.6,239.9 L600.6,229.4 L603.1,223.2 L606.1,222.4 L609.3,230.4 L612.3,219.9 L615.6,213.7 L618.6,223.6 L621.3,231.0 L622.5,234.6 L626.2,239.1 L630.0,234.6 L631.7,230.9 L634.2,222.7 L637.4,232.1 L640.4,206.0 L643.2,205.5 L646.2,184.8 L649.2,164.8 L652.4,162.8 L655.4,161.1 L658.6,134.4 L661.6,143.6 L664.9,152.4 L667.4,155.6 L671.1,171.1 L674.1,174.8 L677.3,179.3 L680.6,179.3 L684.1,192.3 L687.3,199.7 L690.3,207.2 L693.0,210.9 L695.5,219.7 L698.5,235.9 L701.0,237.1 L704.7,254.1 L707.7,247.1 L711.0,229.6 L714.0,217.2 L717.2,202.2 L720.2,194.7 L723.4,189.8 L726.4,186.0 L729.7,183.5 L732.9,189.3 L735.9,190.3 L738.9,191.0 L741.6,178.5 L744.6,179.3 L748.4,182.3 L751.4,181.8 L753.8,189.8 L757.1,201.0 L760.3,201.7 L763.3,207.2 L766.6,213.4 L769.6,219.7 L772.5,227.1 L775.0,229.6 L778.3,220.9 L781.3,214.7 L784.5,208.5 L787.7,188.5 L791.2,172.3 L794.0,193.5 L797.0,218.4 L800.0,220.9 L803.2,225.9 L806.2,233.4 L809.4,235.1 L812.4,240.1 L815.7,239.6 L818.7,229.6 L821.4,220.9 L824.4,229.1 L827.6,230.9 L831.4,233.4 L834.4,227.1 L837.3,222.2 L840.6,220.9 L843.6,206.0 L846.3,201.7 L849.3,197.7 L852.3,222.2 L855.0,221.4 L858.0,219.7 L861.3,211.7 L864.3,213.4 L867.5,217.7 L870.8,208.7 L873.8,205.7 L876.8,200.7 L879.8,197.7 L883.2,202.1 L886.3,205.3 L889.1,202.1 L892.1,187.8 L895.1,185.4 L898.7,176.8 L901.7,147.5 L904.3,150.9 L907.1,158.9 L909.7,169.8 L912.1,185.8 L914.7,191.4 L917.7,193.4 L920.6,193.7 L923.6,174.8 L926.2,181.8 L929.0,191.8" fill="none" stroke="#1ec98a" stroke-width="2.8" stroke-linejoin="round" stroke-linecap="round" clip-path="url(#up)"/>
<path d="M9.3,219.5 L11.4,201.0 L14.5,199.4 L18.0,188.7 L21.2,188.2 L24.2,195.0 L25.7,201.0 L27.0,216.0 L28.3,229.0 L31.2,242.3 L33.6,258.5 L36.0,266.0 L40.0,279.7 L42.9,283.4 L46.0,274.7 L52.3,256.0 L54.8,258.5 L57.3,257.2 L61.0,257.7 L64.3,250.5 L67.3,251.0 L69.8,259.7 L76.0,287.1 L79.8,295.9 L83.0,307.6 L86.0,300.9 L89.0,300.0 L92.2,309.0 L95.2,308.3 L98.0,297.0 L101.0,298.4 L107.2,319.5 L109.7,321.3 L117.0,320.3 L122.0,317.6 L127.0,319.0 L132.0,319.5 L134.6,322.5 L137.8,309.0 L140.8,309.6 L147.0,314.6 L150.3,312.8 L156.2,316.0 L162.5,329.0 L165.5,327.7 L172.4,345.9 L175.0,345.2 L178.0,327.2 L181.2,301.0 L184.1,306.0 L187.4,300.3 L190.6,302.8 L193.6,306.8 L199.9,326.0 L202.3,329.7 L205.3,331.5 L208.6,328.5 L212.3,324.2 L215.3,316.8 L218.5,326.0 L221.5,329.0 L224.8,336.7 L227.8,329.2 L233.5,320.3 L236.7,317.3 L239.7,325.2 L242.7,327.2 L246.5,335.5 L252.2,338.5 L255.9,321.0 L258.4,314.8 L261.4,289.9 L264.2,267.9 L267.1,273.6 L270.9,285.4 L273.9,269.4 L277.1,263.7 L280.1,259.9 L283.3,271.2 L286.6,273.6 L289.6,278.1 L292.8,277.4 L295.8,283.6 L298.8,277.9 L302.0,283.6 L305.0,293.6 L308.3,259.9 L310.8,242.5 L314.0,244.2 L317.0,243.7 L320.0,257.4 L323.2,259.9 L326.2,266.2 L329.5,284.9 L332.5,297.8 L335.7,299.1 L339.4,297.3 L342.4,293.6 L345.7,287.4 L348.2,283.6 L351.4,282.9 L354.4,276.1 L357.4,280.4 L360.1,273.6 L363.1,319.8 L365.6,333.5 L369.3,339.7 L372.3,357.1 L375.6,388.3 L378.6,353.4 L380.6,347.2 L384.3,327.2 L387.3,317.3 L390.0,309.6 L391.2,303.4 L393.7,299.7 L397.0,300.9 L400.0,295.9 L403.0,294.7 L406.2,296.7 L409.4,289.7 L412.4,279.2 L415.7,280.2 L418.7,284.7 L421.2,294.7 L424.9,309.6 L427.9,317.1 L431.1,330.8 L434.4,332.1 L436.9,324.6 L439.9,294.7 L442.8,292.2 L446.1,313.4 L449.1,318.4 L451.8,312.1 L454.8,281.0 L458.0,270.3 L461.0,279.2 L464.3,279.7 L467.3,280.2 L470.3,287.2 L473.5,304.7 L476.7,328.3 L479.7,319.6 L483.0,312.1 L486.0,302.2 L489.0,289.7 L492.2,282.7 L495.2,284.7 L497.9,281.0 L501.4,284.7 L504.7,288.5 L507.6,299.7 L510.9,322.1 L513.9,324.1 L516.6,322.6 L519.6,329.6 L523.4,335.8 L526.3,340.8 L529.1,332.1 L531.6,299.7 L534.1,287.2 L536.6,280.2 L539.6,281.5 L542.0,283.0 L545.0,279.7 L547.8,257.3 L550.8,227.4 L553.8,201.2 L557.0,193.7 L558.6,227.4 L560.2,256.0 L563.2,268.5 L566.2,252.3 L569.0,267.3 L572.0,271.0 L575.2,267.8 L578.7,272.8 L581.9,264.8 L584.9,256.0 L588.2,246.8 L591.1,249.8 L594.4,246.8 L597.6,239.9 L600.6,229.4 L603.1,223.2 L606.1,222.4 L609.3,230.4 L612.3,219.9 L615.6,213.7 L618.6,223.6 L621.3,231.0 L622.5,234.6 L626.2,239.1 L630.0,234.6 L631.7,230.9 L634.2,222.7 L637.4,232.1 L640.4,206.0 L643.2,205.5 L646.2,184.8 L649.2,164.8 L652.4,162.8 L655.4,161.1 L658.6,134.4 L661.6,143.6 L664.9,152.4 L667.4,155.6 L671.1,171.1 L674.1,174.8 L677.3,179.3 L680.6,179.3 L684.1,192.3 L687.3,199.7 L690.3,207.2 L693.0,210.9 L695.5,219.7 L698.5,235.9 L701.0,237.1 L704.7,254.1 L707.7,247.1 L711.0,229.6 L714.0,217.2 L717.2,202.2 L720.2,194.7 L723.4,189.8 L726.4,186.0 L729.7,183.5 L732.9,189.3 L735.9,190.3 L738.9,191.0 L741.6,178.5 L744.6,179.3 L748.4,182.3 L751.4,181.8 L753.8,189.8 L757.1,201.0 L760.3,201.7 L763.3,207.2 L766.6,213.4 L769.6,219.7 L772.5,227.1 L775.0,229.6 L778.3,220.9 L781.3,214.7 L784.5,208.5 L787.7,188.5 L791.2,172.3 L794.0,193.5 L797.0,218.4 L800.0,220.9 L803.2,225.9 L806.2,233.4 L809.4,235.1 L812.4,240.1 L815.7,239.6 L818.7,229.6 L821.4,220.9 L824.4,229.1 L827.6,230.9 L831.4,233.4 L834.4,227.1 L837.3,222.2 L840.6,220.9 L843.6,206.0 L846.3,201.7 L849.3,197.7 L852.3,222.2 L855.0,221.4 L858.0,219.7 L861.3,211.7 L864.3,213.4 L867.5,217.7 L870.8,208.7 L873.8,205.7 L876.8,200.7 L879.8,197.7 L883.2,202.1 L886.3,205.3 L889.1,202.1 L892.1,187.8 L895.1,185.4 L898.7,176.8 L901.7,147.5 L904.3,150.9 L907.1,158.9 L909.7,169.8 L912.1,185.8 L914.7,191.4 L917.7,193.4 L920.6,193.7 L923.6,174.8 L926.2,181.8 L929.0,191.8" fill="none" stroke="#ea3943" stroke-width="2.8" stroke-linejoin="round" stroke-linecap="round" clip-path="url(#dn)"/>
<!-- start price label -->
<rect x="11" y="216.5" width="56" height="28.5" rx="6" fill="#2a2d3c" fill-opacity=".88"/>
<!-- price badge -->

<!-- watermark -->
<g fill="none" stroke="#d5d9e8" stroke-width="2.7" stroke-linecap="round" stroke-linejoin="round">
<path d="M759.4,448.6A13.45,13.45 0 1 1 763.5,439.6C763.6,442.7 762.7,444.5 760.9,444.5C759.4,444.5 759,443 759,441C759,438 758.6,433.7 755.9,433.7C754.6,433.7 753.8,434.6 753.2,436.2L750.3,443.9L749.7,436.2C749.5,433.6 748,432.9 746.9,434.6L739.6,445.6"/>
</g>
<text x="774.4" y="446.7" font-family="Liberation Sans, sans-serif" font-size="19.6" fill="#d5d9e8" stroke="#d5d9e8" stroke-width=".95" stroke-linejoin="round" textLength="134.8" lengthAdjust="spacing">CoinMarketCap</text>

<!-- navigator -->
<g stroke="#272c3b" stroke-width="1"><line x1="35.4" x2="35.4" y1="567.3" y2="617.3"/><line x1="130.9" x2="130.9" y1="567.3" y2="617.3"/><line x1="225.6" x2="225.6" y1="567.3" y2="617.3"/><line x1="322.3" x2="322.3" y1="567.3" y2="617.3"/><line x1="415.3" x2="415.3" y1="567.3" y2="617.3"/><line x1="512" x2="512" y1="567.3" y2="617.3"/><line x1="607.2" x2="607.2" y1="567.3" y2="617.3"/><line x1="702.4" x2="702.4" y1="567.3" y2="617.3"/><line x1="797.4" x2="797.4" y1="567.3" y2="617.3"/><line x1="893.3" x2="893.3" y1="567.3" y2="617.3"/>
<line x1="9.2" x2="928.7" y1="567.3" y2="567.3"/><line x1="9.2" x2="9.2" y1="567.3" y2="617.3"/><line x1="928.7" x2="928.7" y1="567.3" y2="617.3"/></g>
<path d="M9.2,571.7 L11.0,587.2 L13.0,596.1 L16.0,602.1 L20.0,606.1 L23.4,607.1 L26.4,610.1 L29.9,612.5 L34.9,613.5 L38.9,613.0 L44.9,614.5 L51.9,613.5 L56.8,611.5 L64.8,610.6 L70.8,609.2 L74.8,611.2 L80.8,613.0 L85.8,612.5 L91.7,613.5 L99.7,613.2 L104.7,612.2 L112.0,613.2 L122.0,614.9 L130.0,614.7 L137.0,614.1 L144.6,616.1 L160.0,616.2 L174.5,615.8 L185.0,616.4 L199.4,616.9 L260.0,617.1 L320.0,616.6 L350.0,616.9 L400.0,617.1 L480.0,616.9 L540.0,616.6 L558.0,616.1 L580.0,616.8 L640.0,616.9 L680.0,616.6 L692.0,616.0 L700.0,616.6 L760.0,617.0 L860.0,616.9 L867.0,616.4 L875.0,616.9 L928.7,617.0 L928.7,617.3 L9.2,617.3 Z" fill="#1c2340"/>
<path d="M9.2,571.7 L11.0,587.2 L13.0,596.1 L16.0,602.1 L20.0,606.1 L23.4,607.1 L26.4,610.1 L29.9,612.5 L34.9,613.5 L38.9,613.0 L44.9,614.5 L51.9,613.5 L56.8,611.5 L64.8,610.6 L70.8,609.2 L74.8,611.2 L80.8,613.0 L85.8,612.5 L91.7,613.5 L99.7,613.2 L104.7,612.2 L112.0,613.2 L122.0,614.9 L130.0,614.7 L137.0,614.1 L144.6,616.1 L160.0,616.2 L174.5,615.8 L185.0,616.4 L199.4,616.9 L260.0,617.1 L320.0,616.6 L350.0,616.9 L400.0,617.1 L480.0,616.9 L540.0,616.6 L558.0,616.1 L580.0,616.8 L640.0,616.9 L680.0,616.6 L692.0,616.0 L700.0,616.6 L760.0,617.0 L860.0,616.9 L867.0,616.4 L875.0,616.9 L928.7,617.0" fill="none" stroke="#4068e4" stroke-width="1.35" stroke-linejoin="round"/>

<!-- handle -->
<rect x="919.4" y="579.6" width="18" height="24" rx="9" fill="#1e2231"/>
<path d="M926,587.2V595.6M929.8,587.2V595.6" stroke="#cfd3de" stroke-width="1.3"/>

<!-- 12 badge -->
<path d="M27.5,534H49A15,15 0 0 1 49,564H27.5Q22.6,564 19.6,560.6L10,550.7Q8.4,549 10,547.3L19.6,537.4Q22.6,534 27.5,534Z" fill="#6c7187"/>
<g fill="none" stroke="#fff" stroke-width="1.7" stroke-linecap="round" stroke-linejoin="round">
<path d="M24.8,546.5A5.4,5.4 0 1 1 24.8,551.9"/><path d="M29.5,545.7V549.3L32.6,551.2"/>
</g>
<path d="M22,545.5L25.7,545.1L24,548.6Z" fill="#fff" stroke="#fff" stroke-width=".7" stroke-linejoin="round"/>
<!-- analyze -->
<path d="M836.9,534H870.3L874.9,529.3L879.5,534H913.9A15,15 0 0 1 913.9,564H836.9A15,15 0 0 1 836.9,534Z" fill="#3861fb"/>
<g fill="none" stroke="#fff" stroke-width="1.6" stroke-linecap="round" stroke-linejoin="round">
<path d="M831.7,556.9L832.8,553.3A7.3,7.3 0 1 1 835.8,556Z"/>
</g>
<g fill="none" stroke="#fff" stroke-width="1.9" stroke-linecap="round" stroke-linejoin="round">
<path d="M834.6,551L836.9,546.9L838.9,550.9L841.3,545.9L843.7,550.3"/>
<path d="M910.4,544.9L914.9,549.2L910.4,553.5" stroke-width="1.7"/>
</g>
</svg>
<div class="ly">
<div style="position:absolute;left:11px;top:216.5px;width:56px;height:28.5px;line-height:28.5px;text-align:center;padding-left:2px;font-size:14px;font-weight:bold;color:#9da3b8;letter-spacing:.55px">2.4745</div>
<div class="yl" style="top:115.8px">2.52</div><div class="yl" style="top:167.3px">2.50</div><div class="yl" style="top:219.1px">2.47</div><div class="yl" style="top:270.8px">2.45</div><div class="yl" style="top:323.3px">2.42</div><div class="yl" style="top:374.8px">2.40</div><div class="yl" style="top:427.3px">2.37</div>
<div style="position:absolute;left:929.3px;top:175.4px;width:45px;height:30.8px;line-height:33.8px;text-align:center;font-size:15px;font-weight:bold;color:#fff;letter-spacing:.1px;background:#16c784;border-radius:4px">2.49</div>
<div style="position:absolute;left:944.5px;top:485.5px;height:16px;line-height:16px;font-size:14px;font-weight:bold;color:#a1a7bb;letter-spacing:1.1px">USD</div>
<div class="xl" style="left:-2.9px;letter-spacing:.62px">6:00 PM</div><div class="xl" style="left:81.3px;letter-spacing:.62px">9:00 PM</div><div class="xl" style="left:191.3px;letter-spacing:.3px">9 Mar</div><div class="xl" style="left:302.0px;letter-spacing:.62px">3:00 AM</div><div class="xl" style="left:412.8px;letter-spacing:.62px">6:00 AM</div><div class="xl" style="left:523.6px;letter-spacing:.62px">9:00 AM</div><div class="xl" style="left:634.8px;letter-spacing:.3px">12:00 PM</div><div class="xl" style="left:745.7px;letter-spacing:.62px">3:00 PM</div><div class="xl" style="left:856.6px;letter-spacing:.62px">6:00 PM</div>
<div class="nl" style="left:-3.8px">Jul '21</div><div class="nl" style="left:91.7px">Jan '22</div><div class="nl" style="left:186.4px">Jul '22</div><div class="nl" style="left:283.1px">Jan '23</div><div class="nl" style="left:376.1px">Jul '23</div><div class="nl" style="left:472.8px">Jan '24</div><div class="nl" style="left:568.0px">Jul '24</div><div class="nl" style="left:663.2px">Jan '25</div><div class="nl" style="left:758.2px">Jul '25</div><div class="nl" style="left:854.1px">Jan '26</div>
<div style="position:absolute;left:41.4px;top:534.9px;height:29.2px;line-height:29.2px;font-size:14px;font-weight:bold;color:#fff">12</div>
<div style="position:absolute;left:851.6px;top:535.4px;height:29.2px;line-height:29.2px;font-size:14px;font-weight:bold;color:#fff;letter-spacing:0">Analyze</div>
</div>
</body></html>
